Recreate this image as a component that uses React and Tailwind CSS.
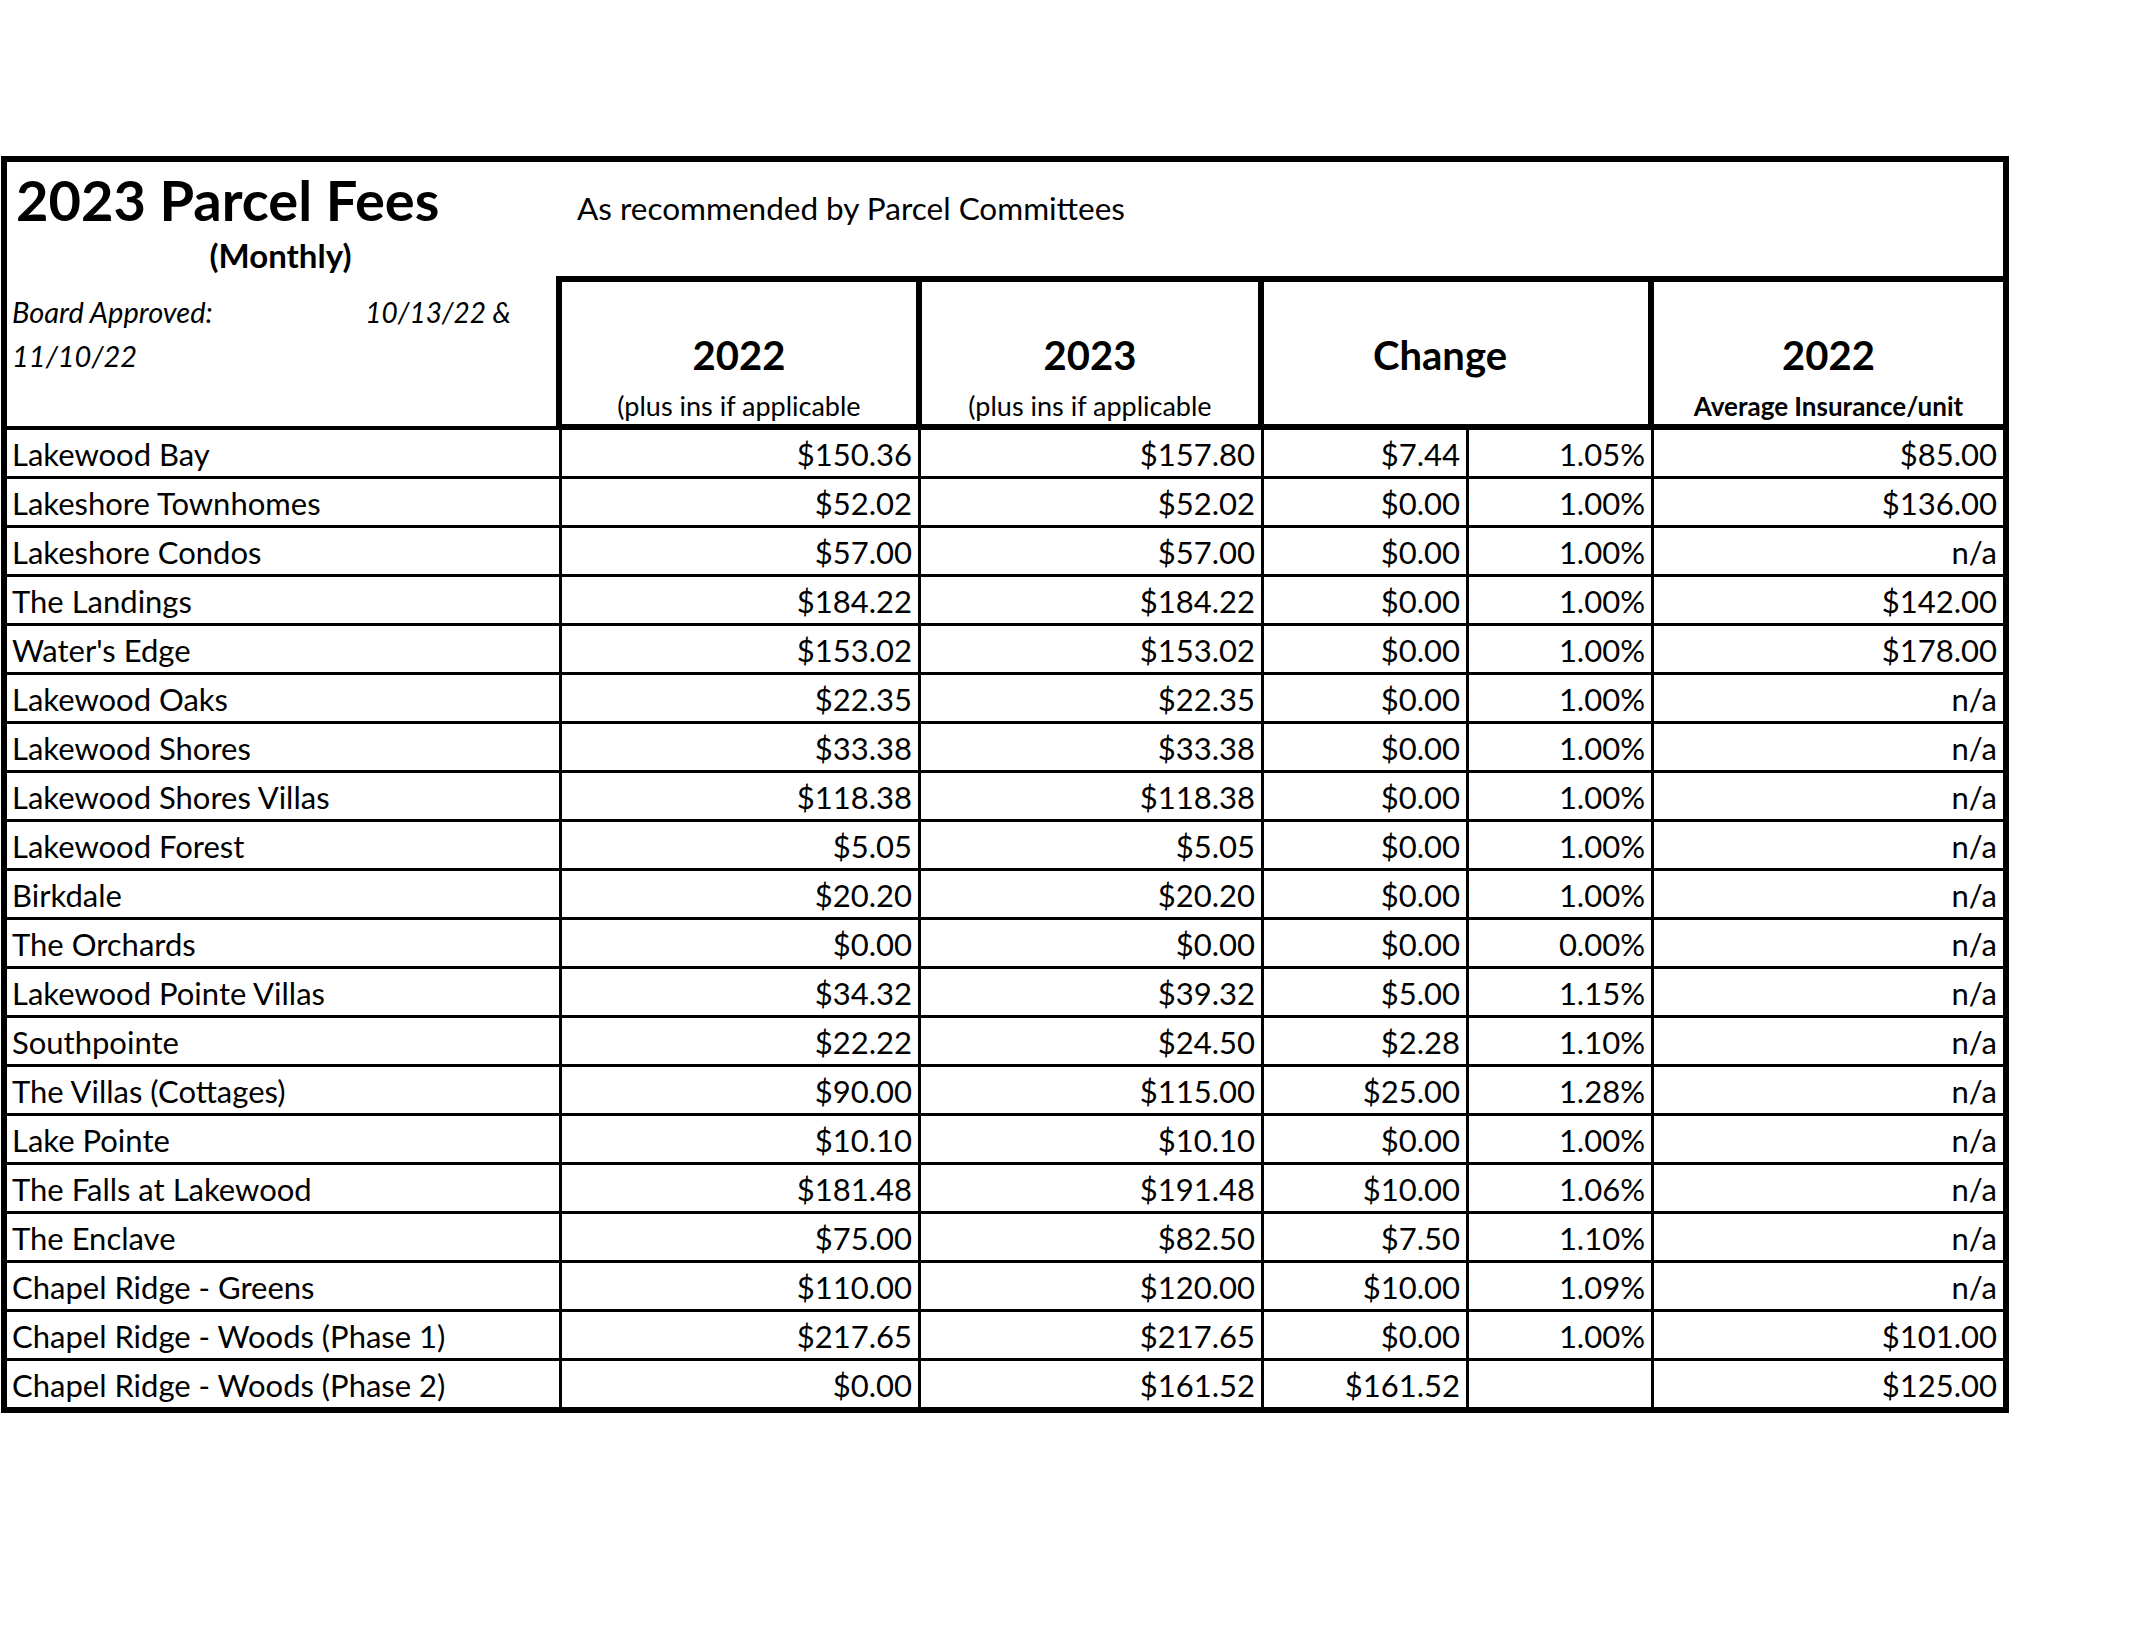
import React from "react";

const rows = [
  ["Lakewood Bay", "$150.36", "$157.80", "$7.44", "1.05%", "$85.00"],
  ["Lakeshore Townhomes", "$52.02", "$52.02", "$0.00", "1.00%", "$136.00"],
  ["Lakeshore Condos", "$57.00", "$57.00", "$0.00", "1.00%", "n/a"],
  ["The Landings", "$184.22", "$184.22", "$0.00", "1.00%", "$142.00"],
  ["Water's Edge", "$153.02", "$153.02", "$0.00", "1.00%", "$178.00"],
  ["Lakewood Oaks", "$22.35", "$22.35", "$0.00", "1.00%", "n/a"],
  ["Lakewood Shores", "$33.38", "$33.38", "$0.00", "1.00%", "n/a"],
  ["Lakewood Shores Villas", "$118.38", "$118.38", "$0.00", "1.00%", "n/a"],
  ["Lakewood Forest", "$5.05", "$5.05", "$0.00", "1.00%", "n/a"],
  ["Birkdale", "$20.20", "$20.20", "$0.00", "1.00%", "n/a"],
  ["The Orchards", "$0.00", "$0.00", "$0.00", "0.00%", "n/a"],
  ["Lakewood Pointe Villas", "$34.32", "$39.32", "$5.00", "1.15%", "n/a"],
  ["Southpointe", "$22.22", "$24.50", "$2.28", "1.10%", "n/a"],
  ["The Villas (Cottages)", "$90.00", "$115.00", "$25.00", "1.28%", "n/a"],
  ["Lake Pointe", "$10.10", "$10.10", "$0.00", "1.00%", "n/a"],
  ["The Falls at Lakewood", "$181.48", "$191.48", "$10.00", "1.06%", "n/a"],
  ["The Enclave", "$75.00", "$82.50", "$7.50", "1.10%", "n/a"],
  ["Chapel Ridge - Greens", "$110.00", "$120.00", "$10.00", "1.09%", "n/a"],
  ["Chapel Ridge - Woods (Phase 1)", "$217.65", "$217.65", "$0.00", "1.00%", "$101.00"],
  ["Chapel Ridge - Woods (Phase 2)", "$0.00", "$161.52", "$161.52", "", "$125.00"],
];

const HeaderCell = ({ title, sub, subClass, className }) => (
  <div className={`flex flex-col justify-end items-center pb-[2px] ${className}`}>
    <div className="text-[40px] font-bold leading-[50px] mb-[10px]">{title}</div>
    <div className={`leading-[32px] whitespace-nowrap ${subClass}`}>{sub || "\u00a0"}</div>
  </div>
);

export default function App() {
  return (
    <div className="w-[2130px] min-h-[1646px] bg-white text-black font-['Lato','Liberation_Sans',sans-serif] pt-[156px] pl-[1px]">
      <div className="w-[2008px] border-[6px] border-black">
        {/* title + column headers */}
        <div className="flex">
          <div className="w-[549px] h-[268px] border-b-[4px] border-black flex flex-col">
            <div className="h-[76px] leading-[76px] pl-[9px] text-[56px] font-bold whitespace-nowrap">
              2023 Parcel Fees
            </div>
            <div className="h-[34px] leading-[34px] text-[33px] font-bold text-center pr-[2px]">
              (Monthly)
            </div>
            <div className="mt-[18px] h-[44px] leading-[44px] pl-[5px] pr-[45px] text-[29px] italic flex justify-between">
              <span>Board Approved:</span>
              <span className="text-[28px]">10/13/22 &amp;</span>
            </div>
            <div className="h-[44px] leading-[44px] pl-[5px] text-[29px] italic">
              11/10/22
            </div>
          </div>
          <div className="flex-1 flex flex-col">
            <div className="h-[114px] pt-[26px] pl-[21px] text-[31.5px] leading-[40px]">
              As recommended by Parcel Committees
            </div>
            <div className="h-[154px] flex border-t-[6px] border-l-[6px] border-b-[6px] border-black">
              <HeaderCell
                className="w-[360px] border-r-[6px] border-black"
                title="2022"
                sub="(plus ins if applicable"
                subClass="text-[27px]"
              />
              <HeaderCell
                className="w-[342px] border-r-[6px] border-black"
                title="2023"
                sub="(plus ins if applicable"
                subClass="text-[27px]"
              />
              <HeaderCell
                className="w-[390px] border-r-[6px] border-black pr-[32px]"
                title="Change"
                sub=""
                subClass="text-[27px]"
              />
              <HeaderCell
                className="flex-1"
                title="2022"
                sub="Average Insurance/unit"
                subClass="text-[26px] font-bold"
              />
            </div>
          </div>
        </div>

        {/* body rows */}
        {rows.map((r, i) => (
          <div
            key={r[0]}
            className={`flex text-[31px] leading-[44px] ${
              i < rows.length - 1 ? "h-[49px] border-b-[3px] border-black" : "h-[46px]"
            }`}
          >
            <div className="w-[555px] pt-[2px] border-r-[3px] border-black pl-[5px] whitespace-nowrap">{r[0]}</div>
            <div className="w-[359px] pt-[2px] border-r-[3px] border-black pr-[6px] text-right">{r[1]}</div>
            <div className="w-[343px] pt-[2px] border-r-[3px] border-black pr-[6px] text-right">{r[2]}</div>
            <div className="w-[205px] pt-[2px] border-r-[3px] border-black pr-[6px] text-right">{r[3]}</div>
            <div className="w-[185px] pt-[2px] border-r-[3px] border-black pr-[6px] text-right">{r[4]}</div>
            <div className="flex-1 pt-[2px] pr-[6px] text-right">{r[5]}</div>
          </div>
        ))}
      </div>
    </div>
  );
}
